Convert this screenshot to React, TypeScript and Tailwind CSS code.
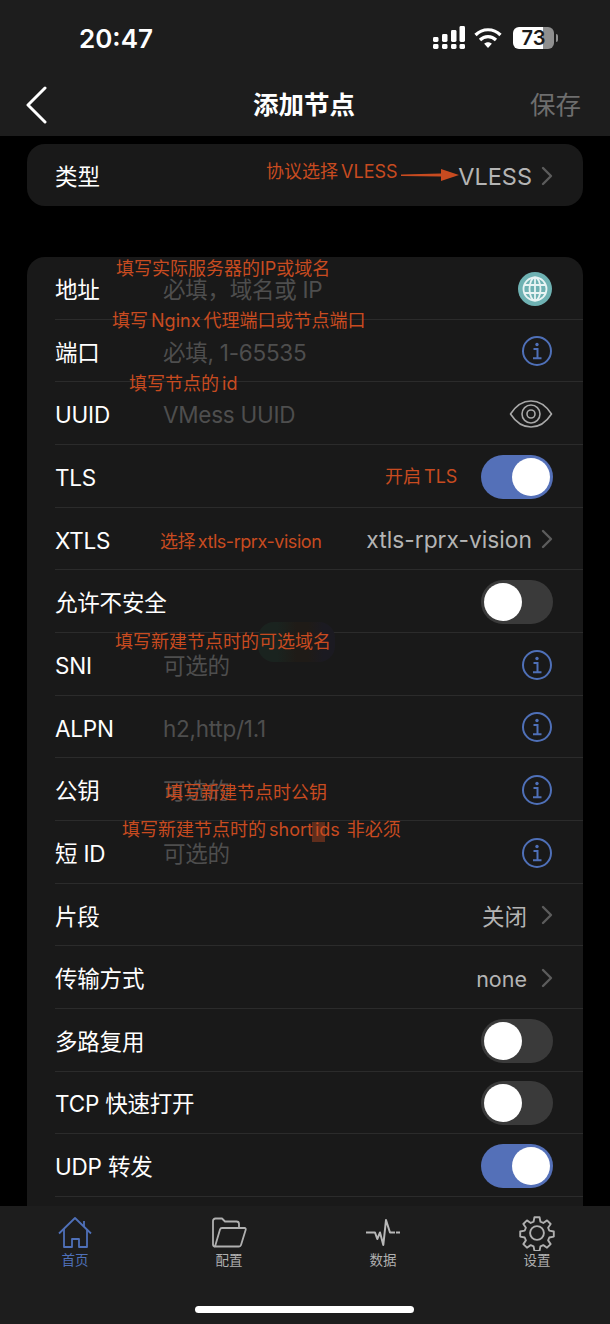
import type { ReactNode } from 'react';

const FONT = 'font-["Inter","Noto_Sans_CJK_SC",sans-serif]';

function Chevron() {
  return (
    <svg width="12" height="20" viewBox="0 0 12 20" fill="none" className="shrink-0">
      <path d="M2 2l8 8-8 8" stroke="#5c5c5c" strokeWidth="2.4" strokeLinecap="round" strokeLinejoin="round" />
    </svg>
  );
}

function InfoIcon() {
  return (
    <svg width="32" height="32" viewBox="0 0 32 32" fill="none">
      <circle cx="16" cy="16" r="14" stroke="#4f70b8" strokeWidth="2" />
      <circle cx="16" cy="9.5" r="1.7" fill="#4f70b8" />
      <path d="M12.5 14h4v9M12 23.2h8.5" stroke="#4f70b8" strokeWidth="2" />
    </svg>
  );
}

function GlobeIcon() {
  return (
    <svg width="36" height="36" viewBox="0 0 36 36" fill="none">
      <circle cx="18" cy="18" r="17" fill="#6fb2b3" />
      <circle cx="18" cy="18" r="11.5" stroke="#e8f4f4" strokeWidth="1.8" />
      <ellipse cx="18" cy="18" rx="5.5" ry="11.5" stroke="#e8f4f4" strokeWidth="1.8" />
      <path d="M18 6.5v23M7.5 14h21M7.5 22h21" stroke="#e8f4f4" strokeWidth="1.8" />
    </svg>
  );
}

function EyeIcon() {
  return (
    <svg width="44" height="30" viewBox="0 0 44 30" fill="none">
      <path d="M1.5 15C7 6.5 14 2 22 2s15 4.5 20.5 13C37 23.500 30 28 22 28S7 23.500 1.500 15z" stroke="#a8a8a8" strokeWidth="1.6" strokeLinejoin="round" />
      <circle cx="22" cy="15" r="9" stroke="#a8a8a8" strokeWidth="1.6" />
      <circle cx="22" cy="15" r="4" stroke="#a8a8a8" strokeWidth="1.6" />
    </svg>
  );
}

function Toggle({ on }: { on: boolean }) {
  return (
    <div className={on ? 'flex h-[44px] w-[72px] items-center justify-end rounded-full bg-[#5470b8] pr-[3px]' : 'flex h-[44px] w-[72px] items-center justify-start rounded-full bg-[#3a3a3a] pl-[3px]'}>
      <div className="h-[38px] w-[38px] rounded-full bg-white" />
    </div>
  );
}

function Row({ label, placeholder, right }: { label?: string; placeholder?: string; right?: ReactNode }) {
  return (
    <div className="h-[62.67px] pl-[28px]">
      <div className="flex h-full items-center border-b border-[#2b2b2b] pr-[30px] pt-[2px]">
        <span className="w-[108px] shrink-0 whitespace-nowrap pt-[2px] text-[22.5px] tracking-[-0.2px] text-white">{label}</span>
        <span className="flex-1 whitespace-nowrap pt-[2px] text-[22.5px] tracking-[-0.25px] text-[#4e4e4e]">{placeholder}</span>
        {right}
      </div>
    </div>
  );
}

function Value({ text, size, gap }: { text: string; size: string; gap: string }) {
  return (
    <div className={`flex items-center ${gap}`}>
      <span className={`whitespace-nowrap pt-[2px] text-[#b4b4b4] ${size}`}>{text}</span>
      <Chevron />
    </div>
  );
}

function Note({ className, children }: { className: string; children: ReactNode }) {
  return <span className={`absolute whitespace-nowrap text-[18px] leading-[24px] text-[#c84b20] [word-spacing:-2px] ${className}`}>{children}</span>;
}

function TabItem({ label, active, children }: { label: string; active?: boolean; children: ReactNode }) {
  return (
    <div className="flex w-[154px] shrink-0 flex-col items-center">
      <div className="flex h-[35px] items-center justify-center">{children}</div>
      <span className={active ? 'text-[13.5px] leading-[20px] text-[#4f70b8]' : 'text-[13.5px] leading-[20px] text-[#b0b0b0]'}>{label}</span>
    </div>
  );
}

export default function App() {
  return (
    <div className={`relative flex h-[1324px] w-[610px] flex-col overflow-hidden bg-black ${FONT}`}>
      <header className="h-[136px] shrink-0 bg-[#1d1d1d]">
        <div className="flex h-[76px] items-center justify-between pl-[79px] pr-[52px]">
          <span className="text-[26px] font-semibold text-white">20:47</span>
          <div className="flex items-center gap-[9px]">
            <svg width="32" height="24" viewBox="0 0 32 24" fill="#fff">
              <rect x="0" y="11" width="5.5" height="5" rx="1.4" />
              <rect x="0" y="18" width="5.5" height="5" rx="1.4" />
              <rect x="9" y="8" width="5.5" height="8" rx="1.4" />
              <rect x="9" y="18" width="5.5" height="5" rx="1.4" />
              <rect x="18" y="4" width="5.5" height="12" rx="1.4" />
              <rect x="18" y="18" width="5.5" height="5" rx="1.4" />
              <rect x="26.5" y="0" width="5.5" height="16" rx="1.4" />
              <rect x="26.5" y="18" width="5.5" height="5" rx="1.4" />
            </svg>
            <svg width="28" height="22" viewBox="0 0 28 22" fill="none" stroke="#fff" strokeWidth="3.2">
              <path d="M1.5 8C8.5 1 19.5 1 26.5 8" />
              <path d="M6 13c4.500-4.500 11.500-4.500 16 0" />
              <path d="M14 21l-3.800-4.300c2-2 5.600-2 7.600 0z" fill="#fff" stroke="none" />
            </svg>
            <div className="ml-[2px] flex items-center gap-[2px]">
              <div className="relative flex h-[22px] w-[41px] items-center justify-center overflow-hidden rounded-[6px] bg-[linear-gradient(90deg,#ffffff_73%,#8f8f8f_73%)]">
                <span className="text-[20px] font-semibold leading-none text-[#1a1a1a]">73</span>
              </div>
              <div className="h-[8px] w-[2px] rounded-r bg-[#8f8f8f]" />
            </div>
          </div>
        </div>
        <div className="relative flex h-[60px] items-center justify-between pb-[2px] pl-[25px] pr-[29px]">
          <svg width="22" height="38" viewBox="0 0 22 38" fill="none">
            <path d="M20 2L3 19l17 17" stroke="#fff" strokeWidth="3" strokeLinecap="round" strokeLinejoin="round" />
          </svg>
          <span className="absolute left-0 right-[2px] text-center text-[25.5px] font-semibold text-white">添加节点</span>
          <span className="text-[25.5px] text-[#6e6e6e]">保存</span>
        </div>
      </header>

      <main className="flex-1 overflow-hidden px-[27px] pt-[8px]">
        <div className="flex h-[62px] items-center justify-between rounded-[18px] bg-[#191919] pl-[28px] pr-[30px] pt-[2px]">
          <span className="pt-[2px] text-[22.5px] text-white">类型</span>
          <Value text="VLESS" size="text-[23.5px]" gap="gap-[9px]" />
        </div>
        <div className="mt-[51px] overflow-hidden rounded-[18px] bg-[#191919]">
          <Row label="地址" placeholder="必填，域名或 IP" right={<GlobeIcon />} />
          <Row label="端口" placeholder="必填, 1-65535" right={<InfoIcon />} />
          <Row label="UUID" placeholder="VMess UUID" right={<EyeIcon />} />
          <Row label="TLS" right={<Toggle on />} />
          <Row label="XTLS" right={<Value text="xtls-rprx-vision" size="text-[22.8px]" gap="gap-[9px]" />} />
          <Row label="允许不安全" right={<Toggle on={false} />} />
          <Row label="SNI" placeholder="可选的" right={<InfoIcon />} />
          <Row label="ALPN" placeholder="h2,http/1.1" right={<InfoIcon />} />
          <Row label="公钥" placeholder="可选的" right={<InfoIcon />} />
          <Row label="短 ID" placeholder="可选的" right={<InfoIcon />} />
          <Row label="片段" right={<Value text="关闭" size="text-[22.5px]" gap="gap-[14px]" />} />
          <Row label="传输方式" right={<Value text="none" size="text-[21.5px]" gap="gap-[14px]" />} />
          <Row label="多路复用" right={<Toggle on={false} />} />
          <Row label="TCP 快速打开" right={<Toggle on={false} />} />
          <Row label="UDP 转发" right={<Toggle on />} />
          <Row />
        </div>
      </main>

      <nav className="h-[118px] shrink-0 bg-[#1d1d1d] pt-[9px]">
        <div className="-ml-[2px] flex">
          <TabItem label="首页" active>
            <svg width="34" height="32" viewBox="0 0 34 32" fill="none" stroke="#4f70b8" strokeWidth="1.8" strokeLinejoin="round">
              <path d="M1 16.500L17 1l16 15.500" />
              <path d="M6 12v18h8v-8h7v8h8V12" />
              <path d="M26 4v6" />
            </svg>
          </TabItem>
          <TabItem label="配置">
            <svg width="35" height="31" viewBox="0 0 35 31" fill="none" stroke="#b0b0b0" strokeWidth="1.8" strokeLinejoin="round">
              <path d="M3 29.500C1.500 29.500 1 28.500 1 27.500V4c0-1.500 1-2.500 2.500-2.500H10l3 3h11.500c1.500 0 2.500 1 2.500 2.500V11" />
              <path d="M3 29.500l5-17c.3-1 1-1.500 2-1.500h22.500c1 0 1.500.7 1.200 1.700L29 28c-.3 1-1 1.500-2 1.500H3z" />
            </svg>
          </TabItem>
          <TabItem label="数据">
            <svg width="34" height="28" viewBox="0 0 34 28" fill="none" stroke="#b8b8b8" strokeWidth="2" strokeLinejoin="round">
              <path d="M0 13.500h9l2.300 6.500 2.700-6.500 3.300 12.500L20 1l4 12.500h5" />
              <path d="M30 13.500h4" />
            </svg>
          </TabItem>
          <TabItem label="设置">
            <svg width="36" height="36" viewBox="0 0 24 24" fill="none" stroke="#b0b0b0" strokeWidth="1.25" strokeLinejoin="round">
              <path d="M10.300 1.500h3.400l.6 3 1.900.8 2.500-1.700 2.400 2.400-1.700 2.500.8 1.900 3 .6v3.400l-3 .6-.8 1.900 1.700 2.500-2.400 2.400-2.500-1.700-1.900.8-.6 3h-3.400l-.6-3-1.900-.8-2.500 1.700-2.400-2.400 1.700-2.500-.8-1.900-3-.6v-3.400l3-.6.8-1.900-1.700-2.500 2.400-2.400 2.500 1.700 1.900-.8z" />
              <circle cx="12" cy="12" r="4.600" />
            </svg>
          </TabItem>
        </div>
        <div className="ml-[195px] mt-[36px] h-[7px] w-[219px] rounded-full bg-white" />
      </nav>

      <div className="absolute left-[258px] top-[622px] h-[40px] w-[77px] rounded-[16px] bg-[linear-gradient(90deg,#1a231f_0%,#1a231f_25%,#1f1b17_50%,#1f1b17_65%,#1b1a21_85%,#1b1a21_100%)]" />
      <div className="absolute left-[312px] top-[822px] h-[20px] w-[13px] bg-[#c84b20]/40" />

      <Note className="left-[266px] top-[160px]">协议选择 VLESS</Note>
      <svg className="absolute left-[401px] top-[168px]" width="58" height="14" viewBox="0 0 58 14">
        <path d="M0 6.500L40 5.500 40 1 58 7 40 13 40 8.500 0 8z" fill="#c84b20" />
      </svg>
      <Note className="left-[116px] top-[257px]">填写实际服务器的IP或域名</Note>
      <Note className="left-[112px] top-[309px]">填写 Nginx 代理端口或节点端口</Note>
      <Note className="left-[129px] top-[372px]">填写节点的 id</Note>
      <Note className="left-[385px] top-[465px]">开启 TLS</Note>
      <Note className="left-[160px] top-[530px] tracking-[-0.45px]">选择 xtls-rprx-vision</Note>
      <Note className="left-[115px] top-[630px]">填写新建节点时的可选域名</Note>
      <Note className="left-[165px] top-[781px]">填写新建节点时公钥</Note>
      <Note className="left-[122px] top-[818px]">
        填写新建节点时的 short<span className="ml-[2px]">ids</span>
        <span className="ml-[7px]">非必须</span>
      </Note>
    </div>
  );
}
